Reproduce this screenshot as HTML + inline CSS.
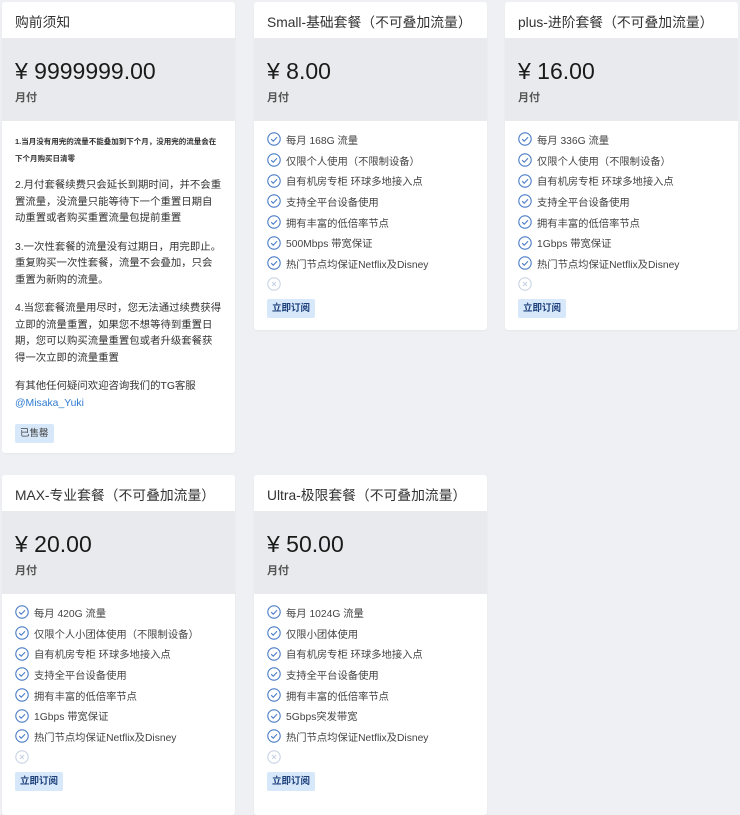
<!DOCTYPE html>
<html><head><meta charset="utf-8"><style>
*{margin:0;padding:0;box-sizing:border-box}
body{width:740px;height:797px;overflow:hidden;background:#eef0f4;font-family:"Liberation Sans","Noto Sans CJK SC",sans-serif;color:#3a3a3a;position:relative}
.card{position:absolute;width:233px;background:#fff;border-radius:3px;box-shadow:0 1px 2px rgba(0,0,0,.04);overflow:hidden}
.hd{height:36px;padding:9px 13px 0;font-size:13.8px;color:#333;white-space:nowrap}
.pr{height:83px;background:#e9eaed;padding:18px 13px 0}
.pr .p{font-size:23px;color:#1a1a1a;line-height:30px}
.pr .m{font-size:11px;color:#555;margin-top:3px;font-weight:bold}
.bd{padding:8px 13px 11px}
.li{height:20.7px;display:flex;align-items:center;font-size:10.3px;color:#444;white-space:nowrap}
.li svg{margin-right:5px;flex:none}
.btn{display:inline-block;margin-top:4px;background:#d7e8fb;color:#1d3f7a;font-size:9.5px;font-weight:bold;padding:3px 5px;border-radius:2px;line-height:13px}
.note{font-size:10.4px;line-height:16.5px;color:#333}
</style></head><body>
<svg width="0" height="0" style="position:absolute"><defs>
<symbol id="ck" viewBox="0 0 14 14"><circle cx="7" cy="7" r="6.2" fill="none" stroke="#4a7cc8" stroke-width="1.1"/><path d="M4.2 7.2l2 2 3.8-4" fill="none" stroke="#4a7cc8" stroke-width="1.1"/></symbol>
<symbol id="x" viewBox="0 0 14 14"><circle cx="7" cy="7" r="6.2" fill="none" stroke="#c9d3e3" stroke-width="1.1"/><path d="M5 5l4 4M9 5l-4 4" fill="none" stroke="#c9d3e3" stroke-width="1.1"/></symbol>
</defs></svg>

<div class="card" style="left:2px;top:2px;height:451px">
<div class="hd">购前须知</div>
<div class="pr"><div class="p">¥ 9999999.00</div><div class="m">月付</div></div>
<div class="bd" style="padding-top:12px">
<div style="font-size:7.5px;line-height:17px;color:#333;font-weight:bold">1.当月没有用完的流量不能叠加到下个月，没用完的流量会在下个月购买日清零</div>
<div class="note" style="margin-top:11px">2.月付套餐续费只会延长到期时间，并不会重置流量，没流量只能等待下一个重置日期自动重置或者购买重置流量包提前重置</div>
<div class="note" style="margin-top:12px">3.一次性套餐的流量没有过期日，用完即止。重复购买一次性套餐，流量不会叠加，只会重置为新购的流量。</div>
<div class="note" style="margin-top:12px">4.当您套餐流量用尽时，您无法通过续费获得立即的流量重置，如果您不想等待到重置日期，您可以购买流量重置包或者升级套餐获得一次立即的流量重置</div>
<div class="note" style="margin-top:12px">有其他任何疑问欢迎咨询我们的TG客服<br><span style="color:#2e7bd0">@Misaka_Yuki</span></div>
<div class="btn" style="margin-top:12px;color:#444;font-weight:normal">已售罄</div>
</div></div>

<div class="card" style="left:254px;top:2px;height:328px">
<div class="hd">Small-基础套餐（不可叠加流量）</div>
<div class="pr"><div class="p">¥ 8.00</div><div class="m">月付</div></div>
<div class="bd">
<div class="li"><svg width="14" height="14"><use href="#ck"/></svg>每月 168G 流量</div>
<div class="li"><svg width="14" height="14"><use href="#ck"/></svg>仅限个人使用（不限制设备）</div>
<div class="li"><svg width="14" height="14"><use href="#ck"/></svg>自有机房专柜 环球多地接入点</div>
<div class="li"><svg width="14" height="14"><use href="#ck"/></svg>支持全平台设备使用</div>
<div class="li"><svg width="14" height="14"><use href="#ck"/></svg>拥有丰富的低倍率节点</div>
<div class="li"><svg width="14" height="14"><use href="#ck"/></svg>500Mbps 带宽保证</div>
<div class="li"><svg width="14" height="14"><use href="#ck"/></svg>热门节点均保证Netflix及Disney</div>
<div class="li"><svg width="14" height="14"><use href="#x"/></svg></div>
<div class="btn">立即订阅</div>
</div></div>

<div class="card" style="left:505px;top:2px;height:328px">
<div class="hd">plus-进阶套餐（不可叠加流量）</div>
<div class="pr"><div class="p">¥ 16.00</div><div class="m">月付</div></div>
<div class="bd">
<div class="li"><svg width="14" height="14"><use href="#ck"/></svg>每月 336G 流量</div>
<div class="li"><svg width="14" height="14"><use href="#ck"/></svg>仅限个人使用（不限制设备）</div>
<div class="li"><svg width="14" height="14"><use href="#ck"/></svg>自有机房专柜 环球多地接入点</div>
<div class="li"><svg width="14" height="14"><use href="#ck"/></svg>支持全平台设备使用</div>
<div class="li"><svg width="14" height="14"><use href="#ck"/></svg>拥有丰富的低倍率节点</div>
<div class="li"><svg width="14" height="14"><use href="#ck"/></svg>1Gbps 带宽保证</div>
<div class="li"><svg width="14" height="14"><use href="#ck"/></svg>热门节点均保证Netflix及Disney</div>
<div class="li"><svg width="14" height="14"><use href="#x"/></svg></div>
<div class="btn">立即订阅</div>
</div></div>

<div class="card" style="left:2px;top:475px;height:340px">
<div class="hd">MAX-专业套餐（不可叠加流量）</div>
<div class="pr"><div class="p">¥ 20.00</div><div class="m">月付</div></div>
<div class="bd">
<div class="li"><svg width="14" height="14"><use href="#ck"/></svg>每月 420G 流量</div>
<div class="li"><svg width="14" height="14"><use href="#ck"/></svg>仅限个人小团体使用（不限制设备）</div>
<div class="li"><svg width="14" height="14"><use href="#ck"/></svg>自有机房专柜 环球多地接入点</div>
<div class="li"><svg width="14" height="14"><use href="#ck"/></svg>支持全平台设备使用</div>
<div class="li"><svg width="14" height="14"><use href="#ck"/></svg>拥有丰富的低倍率节点</div>
<div class="li"><svg width="14" height="14"><use href="#ck"/></svg>1Gbps 带宽保证</div>
<div class="li"><svg width="14" height="14"><use href="#ck"/></svg>热门节点均保证Netflix及Disney</div>
<div class="li"><svg width="14" height="14"><use href="#x"/></svg></div>
<div class="btn">立即订阅</div>
</div></div>

<div class="card" style="left:254px;top:475px;height:340px">
<div class="hd">Ultra-极限套餐（不可叠加流量）</div>
<div class="pr"><div class="p">¥ 50.00</div><div class="m">月付</div></div>
<div class="bd">
<div class="li"><svg width="14" height="14"><use href="#ck"/></svg>每月 1024G 流量</div>
<div class="li"><svg width="14" height="14"><use href="#ck"/></svg>仅限小团体使用</div>
<div class="li"><svg width="14" height="14"><use href="#ck"/></svg>自有机房专柜 环球多地接入点</div>
<div class="li"><svg width="14" height="14"><use href="#ck"/></svg>支持全平台设备使用</div>
<div class="li"><svg width="14" height="14"><use href="#ck"/></svg>拥有丰富的低倍率节点</div>
<div class="li"><svg width="14" height="14"><use href="#ck"/></svg>5Gbps突发带宽</div>
<div class="li"><svg width="14" height="14"><use href="#ck"/></svg>热门节点均保证Netflix及Disney</div>
<div class="li"><svg width="14" height="14"><use href="#x"/></svg></div>
<div class="btn">立即订阅</div>
</div></div>
</body></html>
